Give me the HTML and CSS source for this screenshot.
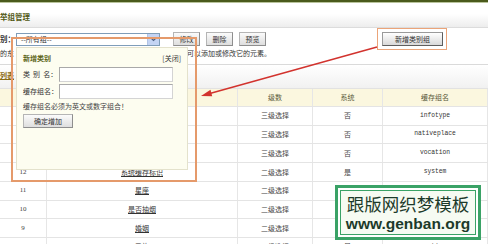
FILE: index.html
```html
<!DOCTYPE html>
<html lang="zh-CN">
<head>
<meta charset="utf-8">
<title>举组管理</title>
<link rel="stylesheet" href="styles.css">
</head>
<body>
<div class="page">
  <div class="topbar"></div>
  <div class="titlebar"><span class="title">举组管理</span></div>
  <div class="toolbar">
    <span class="lbl">别：</span>
    <div class="select">
      <span class="sel-text">--所有组--</span>
      <span class="drop"><svg width="7" height="5" viewBox="0 0 7 5"><path d="M1 1 L3.5 3.5 L6 1" fill="none" stroke="#4d6185" stroke-width="1.2"/></svg></span>
    </div>
    <button class="btn">修改</button>
    <button class="btn">删除</button>
    <button class="btn">预览</button>
    <button class="btn btn-new">新增类别组</button>
  </div>
  <div class="note"><span>的东</span><span class="note-r">可以添加或修改它的元素。</span></div>
  <div class="listbar"><span class="listtitle">列表</span></div>
  <div class="grid">
    <div class="row head"><span></span><span></span><span>级数</span><span>系统</span><span>缓存组名</span></div>
    <div class="row"><span></span><span></span><span>三级选择</span><span>否</span><span class="mono">infotype</span></div>
    <div class="row"><span></span><span></span><span>三级选择</span><span>否</span><span class="mono">nativeplace</span></div>
    <div class="row"><span></span><span></span><span>三级选择</span><span>否</span><span class="mono">vocation</span></div>
    <div class="row"><span class="num">12</span><span><a class="lnk">系统缓存标识</a></span><span>二级选择</span><span>是</span><span class="mono">system</span></div>
    <div class="row"><span class="num">11</span><span><a class="lnk">星座</a></span><span>二级选择</span><span></span><span class="mono"></span></div>
    <div class="row"><span class="num">10</span><span><a class="lnk">是否抽烟</a></span><span>二级选择</span><span></span><span class="mono"></span></div>
    <div class="row"><span class="num">9</span><span><a class="lnk">婚姻</a></span><span>二级选择</span><span></span><span class="mono"></span></div>
    <div class="row"><span class="num">8</span><span><a class="lnk">民族</a></span><span>二级选择</span><span>是</span><span class="mono">nation</span></div>
  </div>

  <div class="popup">
    <div class="pop-head"><span class="pop-title">新增类别</span><span class="pop-close">[关闭]</span></div>
    <div class="pop-row"><span class="pop-lbl pop-lbl-sp">类 别 名：</span><span class="pop-input"></span></div>
    <div class="pop-row pop-row2"><span class="pop-lbl">缓存组名：</span><span class="pop-input"></span></div>
    <div class="pop-hint">缓存组名必须为英文或数字组合！</div>
    <button class="btn pop-btn">确定增加</button>
  </div>

  <div class="mark-rect"></div>
  <div class="mark-btn"></div>
  <svg class="arrow" width="488" height="244" viewBox="0 0 488 244">
    <line x1="377" y1="47" x2="208" y2="94" stroke="#d2332e" stroke-width="1.5"/>
    <polygon points="201,96 210.5,89.8 212.2,96.2" fill="#d2332e"/>
  </svg>

  <div class="watermark">
    <div class="wm-inner">
      <div class="wm-cn">跟版网织梦模板</div>
      <div class="wm-en">www.genban.org</div>
    </div>
  </div>
</div>
</body>
</html>
```
FILE: styles.css
```css
* { box-sizing: border-box; margin: 0; padding: 0; }
html, body { width: 488px; height: 244px; overflow: hidden; }
body {
  font-family: "Noto Sans CJK SC", "Noto Sans", sans-serif;
  font-size: 7px;
  line-height: 1;
  color: #333;
  background: #fff;
}
.page { position: relative; width: 488px; height: 244px; overflow: hidden; }

.topbar { height: 3px; background: #4a5a1c; border-bottom: 1px solid #b9c49c; }
.titlebar {
  height: 25px;
  padding-top: 3px;
  display: flex;
  align-items: center;
  background: linear-gradient(#ffffff 0%, #ffffff 45%, #ededed 100%);
  border-bottom: 1px solid #dcdcdc;
}
.title { font-weight: bold; font-size: 7.5px; color: #4f5712; }

.toolbar { height: 20px; padding-top: 4px; display: flex; align-items: flex-start; }
.lbl { width: 16px; font-weight: bold; font-size: 7.5px; color: #333; margin-top: 3px; }
.select {
  width: 144px; height: 13px; margin-top: 1px;
  border: 1px solid #7f9db9; background: #fff;
  display: flex; align-items: center; justify-content: space-between;
  padding-left: 4px;
}
.sel-text { font-size: 7px; color: #333; }
.drop {
  width: 12px; height: 11px; background: #c4d4f4;
  border-left: 1px solid #b2c4e6;
  display: flex; align-items: center; justify-content: center;
}
.btn {
  font-family: inherit; font-size: 7px; color: #333;
  height: 14px; width: 27px;
  border: 1px solid #b5b5b5; border-right-color: #8e8e8e; border-bottom-color: #8e8e8e;
  background: linear-gradient(#fbfbfb, #dedede);
  display: inline-flex; align-items: center; justify-content: center;
  margin-left: 6px;
}
.toolbar .btn:first-of-type { margin-left: 13px; }
.btn-new {
  width: 61px; margin-left: 116px;
  border-color: #9a9a9a #5e5e5e #5e5e5e #9a9a9a;
  background: linear-gradient(#ffffff, #d9d9d9);
}

.note { height: 17px; border-bottom: 1px solid #dadada; display: flex; align-items: flex-start; padding-top: 1px; }
.note span { line-height: 9px; }
.note-r { margin-left: 173px; }

.listbar { height: 23px; background: linear-gradient(#ffffff, #f1f1f1); padding-top: 6px; }
.listtitle { font-weight: bold; font-size: 7px; color: #8a6a12; text-decoration: underline; line-height: 9px; }

.grid { border-top: 1px solid #e2e2e2; }
.row {
  display: grid;
  grid-template-columns: 47px 191px 75px 70px 105px;
  height: 18.72px;
  border-bottom: 1px solid #e4e4e4;
  background: #fff;
}
.row.head { height: 18px; background: #fbf7df; color: #555; }
.row span {
  display: flex; align-items: center; justify-content: center;
  border-right: 1px solid #e6e6e6;
  font-size: 7px; color: #444;
}
.row.head span { color: #5a5a3a; }
.row span.mono { font-family: "Liberation Mono", monospace; font-size: 6.3px; color: #333; }
.row span.num { font-family: "Liberation Serif", serif; font-size: 7px; }
.lnk { color: #333; text-decoration: underline; }

.popup {
  position: absolute; left: 16px; top: 47px; width: 172px; height: 123px;
  background: #fdfdf0; border: 1px solid #e4e2cc;
  padding: 4px 6px 0 6px;
  display: flex; flex-direction: column; align-items: flex-start;
}
.pop-head { width: 100%; height: 12px; display: flex; justify-content: space-between; align-items: center; }
.pop-title { font-weight: bold; color: #5b6416; font-size: 7px; }
.pop-close { color: #333; font-size: 7px; }
.pop-row { display: flex; align-items: center; margin-top: 3px; height: 15px; }
.pop-row2 { margin-top: 2px; }
.pop-lbl { width: 36px; font-size: 7px; color: #333; white-space: pre; }
.pop-lbl-sp { word-spacing: 1.5px; }
.pop-input { width: 114px; height: 15px; background: #fff; border: 1px solid #a9a9a9; border-right-color: #d4d4d4; border-bottom-color: #d4d4d4; }
.pop-hint { margin-top: 3px; line-height: 8px; font-size: 7px; color: #444; }
.pop-btn { margin-left: 0; margin-top: 4px; width: 50px; height: 14px; }

.mark-rect {
  position: absolute; left: 11px; top: 37px; width: 186px; height: 145px;
  border: 2px solid #e59a6b;
}
.mark-btn {
  position: absolute; left: 377px; top: 28px; width: 70px; height: 22px;
  border: 1.5px solid #eba479;
}
.arrow { position: absolute; left: 0; top: 0; }

.watermark {
  position: absolute; left: 335px; top: 185px; width: 146px; height: 55px;
  border: 3px solid #3aa266; background: #fff; padding: 2px;
}
.wm-inner {
  width: 100%; height: 100%;
  border: 1px solid #3aa266; background: #f6fbf2;
  display: flex; flex-direction: column; align-items: center; justify-content: center;
  gap: 1px;
}
.wm-cn { font-family: "Noto Sans CJK SC", sans-serif; font-size: 17.5px; color: #1c3a2a; line-height: 20px; }
.wm-en { font-family: "Liberation Sans", Arial, sans-serif; font-weight: bold; font-size: 15.5px; color: #1c3a2a; line-height: 17px; }
```
